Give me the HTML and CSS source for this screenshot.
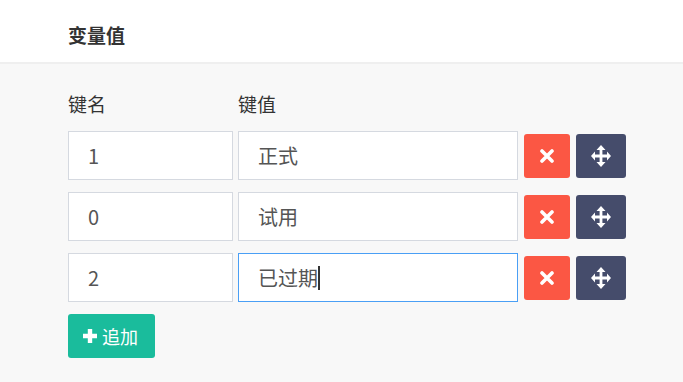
FILE: index.html
```html
<!DOCTYPE html>
<html lang="zh-CN">
<head>
    <meta charset="UTF-8">
    <meta name="viewport" content="width=device-width, initial-scale=1.0">
    <title>变量值</title>
    <link rel="stylesheet" href="styles.css">
</head>
<body>
    <header class="page-header">
        <h1>变量值</h1>
    </header>

    <div class="panel">
        <!-- Column titles -->
        <div class="labels">
            <span class="label-key">键名</span>
            <span class="label-value">键值</span>
        </div>

        <div class="kv-row">
            <div class="field field-key">1</div>
            <div class="field field-value">正式</div>
            <button class="btn btn-remove" title="删除">
                <svg viewBox="0 0 14 14" width="14" height="14"><path d="M2 2L12 12M12 2L2 12" stroke="#fff" stroke-width="3.6" stroke-linecap="round"/></svg>
            </button>
            <button class="btn btn-move" title="移动">
                <svg viewBox="0 0 20 22" width="20" height="22"><path d="M10 0L14.5 5H11.4V9.6H16V6.5L20 11L16 15.5V12.4H11.4V17H14.5L10 22L5.5 17H8.6V12.4H4V15.5L0 11L4 6.5V9.6H8.6V5H5.5Z" fill="#fff"/></svg>
            </button>
        </div>

        <div class="kv-row">
            <div class="field field-key">0</div>
            <div class="field field-value">试用</div>
            <button class="btn btn-remove" title="删除">
                <svg viewBox="0 0 14 14" width="14" height="14"><path d="M2 2L12 12M12 2L2 12" stroke="#fff" stroke-width="3.6" stroke-linecap="round"/></svg>
            </button>
            <button class="btn btn-move" title="移动">
                <svg viewBox="0 0 20 22" width="20" height="22"><path d="M10 0L14.5 5H11.4V9.6H16V6.5L20 11L16 15.5V12.4H11.4V17H14.5L10 22L5.5 17H8.6V12.4H4V15.5L0 11L4 6.5V9.6H8.6V5H5.5Z" fill="#fff"/></svg>
            </button>
        </div>

        <div class="kv-row">
            <div class="field field-key">2</div>
            <div class="field field-value focused">已过期<span class="caret"></span></div>
            <button class="btn btn-remove" title="删除">
                <svg viewBox="0 0 14 14" width="14" height="14"><path d="M2 2L12 12M12 2L2 12" stroke="#fff" stroke-width="3.6" stroke-linecap="round"/></svg>
            </button>
            <button class="btn btn-move" title="移动">
                <svg viewBox="0 0 20 22" width="20" height="22"><path d="M10 0L14.5 5H11.4V9.6H16V6.5L20 11L16 15.5V12.4H11.4V17H14.5L10 22L5.5 17H8.6V12.4H4V15.5L0 11L4 6.5V9.6H8.6V5H5.5Z" fill="#fff"/></svg>
            </button>
        </div>

        <button class="btn-add">
            <svg viewBox="0 0 14 14" width="14" height="14"><path d="M7 0V14M0 7H14" stroke="#fff" stroke-width="4.4"/></svg>
            追加
        </button>
    </div>
</body>
</html>
```

FILE: styles.css
```css
/* General Styling */
body {
    font-family: "Noto Sans CJK SC", "Noto Sans", sans-serif;
    margin: 0;
    padding: 0;
    background-color: #f8f8f8;
    color: #333;
}

.page-header {
    background-color: #fff;
    height: 62px;
    border-bottom: 2px solid #efefef;
    padding: 0 68px;
    display: flex;
    align-items: center;
}

.page-header h1 {
    margin: 0;
    font-size: 19px;
    font-weight: bold;
    color: #333;
    padding-top: 6px;
}

/* Key / value panel */
.panel {
    padding: 26px 0 0 68px;
}

.labels {
    display: flex;
    font-size: 19px;
    height: 28px;
    line-height: 28px;
    margin-bottom: 13px;
}

.label-key {
    width: 170px;
}

.kv-row {
    display: flex;
    align-items: center;
    gap: 5px;
    margin-bottom: 12px;
}

.kv-row > * {
    flex-shrink: 0;
}

.field {
    box-sizing: border-box;
    height: 49px;
    background-color: #fff;
    border: 1px solid #d5d9e0;
    padding: 0 19px;
    font-size: 20px;
    line-height: 47px;
    color: #555;
    display: flex;
    align-items: center;
}

.field-key {
    width: 165px;
}

.field-value {
    width: 280px;
}

.field.focused {
    border-color: #4a9ff5;
}

.caret {
    display: inline-block;
    width: 2px;
    height: 24px;
    background-color: #333;
}

.btn {
    height: 44px;
    border: none;
    border-radius: 3px;
    display: flex;
    align-items: center;
    justify-content: center;
    padding: 0;
    cursor: pointer;
}

.btn-remove {
    width: 46px;
    margin-left: 1px;
    background-color: #fb5744;
}

.btn-move {
    width: 50px;
    margin-left: 1px;
    background-color: #454c6b;
}

.btn-add {
    display: flex;
    align-items: center;
    gap: 5px;
    width: 87px;
    height: 44px;
    padding: 0 0 0 15px;
    margin-top: 0;
    background-color: #1abc9c;
    color: #fff;
    border: none;
    border-radius: 3px;
    font-family: inherit;
    font-size: 18px;
    cursor: pointer;
}
```
